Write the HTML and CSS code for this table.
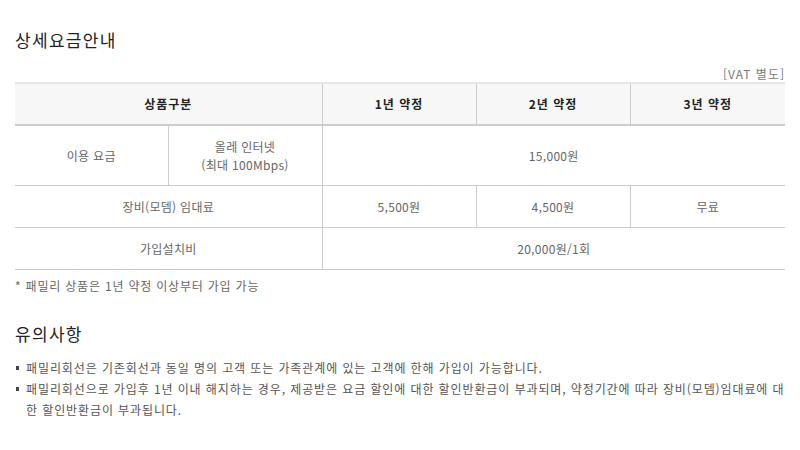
FILE: index.html
```html
<!DOCTYPE html>
<html lang="ko">
<head>
<meta charset="utf-8">
<link rel="stylesheet" href="styles.css">
</head>
<body>
<div class="page">
  <h2 class="title">상세요금안내</h2>
  <p class="vat">[VAT 별도]</p>
  <table class="fee">
    <colgroup>
      <col class="c1"><col class="c2"><col class="c3"><col class="c4"><col class="c5">
    </colgroup>
    <thead>
      <tr class="head">
        <th colspan="2">상품구분</th>
        <th>1년 약정</th>
        <th>2년 약정</th>
        <th>3년 약정</th>
      </tr>
    </thead>
    <tbody>
      <tr class="r1">
        <td>이용 요금</td>
        <td>올레 인터넷<br>(최대 100Mbps)</td>
        <td colspan="3">15,000원</td>
      </tr>
      <tr class="r2">
        <td colspan="2">장비(모뎀) 임대료</td>
        <td>5,500원</td>
        <td>4,500원</td>
        <td>무료</td>
      </tr>
      <tr class="r2">
        <td colspan="2">가입설치비</td>
        <td colspan="3">20,000원/1회</td>
      </tr>
    </tbody>
  </table>
  <p class="note">* 패밀리 상품은 1년 약정 이상부터 가입 가능</p>
  <h2 class="title title2">유의사항</h2>
  <ul class="notice">
    <li>패밀리회선은 기존회선과 동일 명의 고객 또는 가족관계에 있는 고객에 한해 가입이 가능합니다.</li>
    <li>패밀리회선으로 가입후 1년 이내 해지하는 경우, 제공받은 요금 할인에 대한 할인반환금이 부과되며, 약정기간에 따라 장비(모뎀)임대료에 대한 할인반환금이 부과됩니다.</li>
  </ul>
</div>
</body>
</html>
```
FILE: styles.css
```css
html, body {
  margin: 0;
  padding: 0;
  background: #fff;
}
body {
  font-family: "Noto Sans CJK KR", "Noto Sans", sans-serif;
  font-size: 12px;
  color: #666;
}
.page {
  padding: 0 15px;
  width: 770px;
}
.title {
  margin: 0;
  padding-top: 29px;
  font-size: 17px;
  font-weight: normal;
  letter-spacing: 1.3px;
  color: #222;
  line-height: 22px;
}
.vat {
  margin: 16px 0 0;
  text-align: right;
  line-height: 14px;
  font-size: 12px;
  letter-spacing: 1px;
  color: #777;
}
.fee {
  margin-top: 1px;
  width: 770px;
  border-collapse: collapse;
  table-layout: fixed;
}
.c1 { width: 153px; }
.c2 { width: 154px; }
.c3 { width: 154px; }
.c4 { width: 154px; }
.c5 { width: 155px; }
.fee th, .fee td {
  text-align: center;
  border: 1px solid #ccc;
  padding: 0;
  line-height: 18px;
  letter-spacing: 0.3px;
}
.fee tr > :first-child { border-left: none; }
.fee tr > :last-child { border-right: none; }
.fee th {
  height: 40px;
  background: #f7f7f7;
  border-top: 2px solid #e6e6e6;
  border-bottom: 2px solid #ccc;
  color: #222;
  font-weight: bold;
  font-size: 12px;
  letter-spacing: 1px;
}
.r1 td { height: 59px; }
.r2 td { height: 41px; }
.note {
  margin: 8px 0 0;
  line-height: 16px;
  letter-spacing: 0.8px;
  color: #666;
}
.title2 {
  padding-top: 29px;
}
.notice {
  list-style: none;
  margin: 12px 0 0;
  padding: 0;
}
.notice li {
  position: relative;
  padding-left: 11px;
  line-height: 21px;
  letter-spacing: 0.9px;
  color: #555;
}
.notice li::before {
  content: "";
  position: absolute;
  left: 1px;
  top: 9px;
  width: 3px;
  height: 4px;
  background: #444;
}
```
